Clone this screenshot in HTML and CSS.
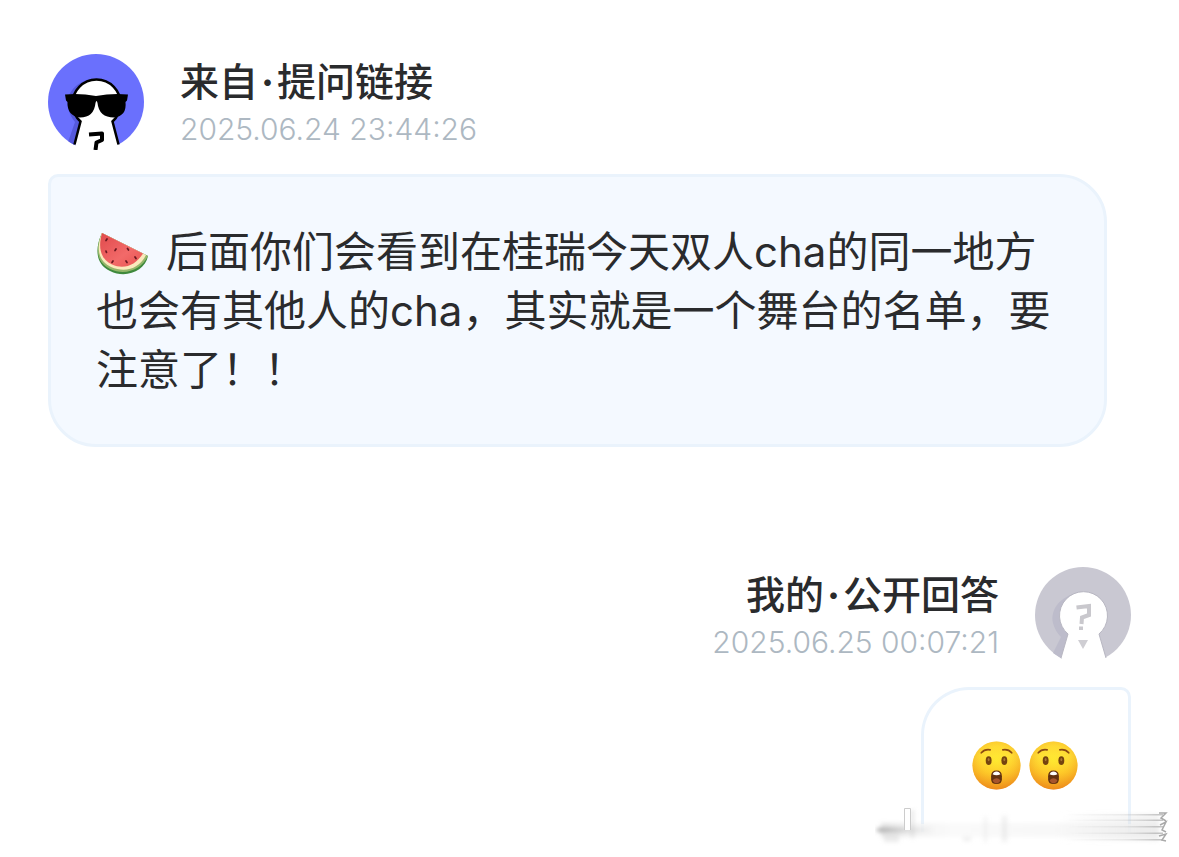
FILE: index.html
```html
<!DOCTYPE html>
<html lang="zh-CN">
<head>
<meta charset="utf-8">
<meta name="viewport" content="width=device-width, initial-scale=1">
<title>提问与回答</title>
<link rel="stylesheet" href="styles.css">
</head>
<body>
<main class="thread">
  <article class="message">
    <header class="sender">
      <svg class="avatar" viewBox="0 0 96 96" aria-hidden="true">
        <defs><clipPath id="disc"><circle cx="48" cy="48" r="48"/></clipPath></defs>
        <circle cx="48" cy="48" r="48" fill="#6a70fd"/>
        <g clip-path="url(#disc)">
          <path d="M42 25C26 29 17 42 20 54Q22 62 27 68L19 91H30L40 60Z" fill="#5559dc"/>
        </g>
        <path d="M26.500 90L32.500 67.500A24 24 0 1 1 64.500 67.500L70.500 90L65 96H31Z" fill="#fff"/>
        <path d="M26.500 90.500L32.500 67.500A24 24 0 1 1 64.500 67.500L70.500 90.500" fill="none" stroke="#000" stroke-width="2.500"/>
        <path d="M17 40.500Q32 39 48 42Q64 39 80 40.500L79 46.500L77.500 48Q79 62 66 63.500Q51 63.500 49.500 49Q48.500 45 47.500 49Q46 63.500 32 63.500Q19 62 19.500 48L18 46.500Z" fill="#000"/>
        <path d="M41 80.500L54 79.500V86L48.500 88.500L47.500 96" fill="none" stroke="#000" stroke-width="4" stroke-linejoin="round"/>
      </svg>
      <div class="meta">
        <h2 class="title">来自<span class="dot">·</span>提问链接</h2>
        <time class="date" datetime="2025-06-24T23:44:26">2025.06.24 23:44:26</time>
      </div>
    </header>
    <p class="bubble question"><svg class="melon" viewBox="0 0 54 46" role="img" aria-label="西瓜">
        <defs>
          <linearGradient id="flesh" x1="0" y1="0" x2="1" y2="1"><stop offset="0" stop-color="#e04a4c"/><stop offset=".6" stop-color="#f26a69"/><stop offset="1" stop-color="#e85450"/></linearGradient>
        </defs>
        <path d="M6 2C-1 17-1 33 14 40C30 48 49 40 52 25Z" fill="#3f8a3d"/>
        <path d="M6 2C-1 17 0 31 14 38C29 45 45 39 52 25Z" fill="#94b76a"/>
        <path d="M6 2C0 17 2 30 15 36C29 42 43 38 50 24Z" fill="#fae9bc"/>
        <path d="M6 2C2 16 4 28 16 33.500C28 39 40 34 47 22.500Z" fill="url(#flesh)"/>
        <g stroke="#6b1720" stroke-width="1.700" stroke-linecap="round"><path d="M11 8l-1 1.500M10 20l.5 1.500M20 18l-1 1.500M31.500 17.500l1 1.500M17 30l-1 1.500M30 30l1 1.500M39 26l1 1.500"/></g>
      </svg>后面你们会看到在桂瑞今天双人cha的同一地方也会有其他人的cha，其实就是一个舞台的名单，要注意了！！</p>
  </article>

  <article class="message reply">
    <header class="sender">
      <svg class="avatar" viewBox="0 0 96 96" aria-hidden="true">
        <circle cx="48" cy="48" r="48" fill="#c9c8d2"/>
        <path d="M43 26C25 29 15 43 18 56Q20 64 26 70L18 86L27 92L36 66Z" fill="#bdbccb"/>
        <path d="M26 91L33 67A24 24 0 1 1 64 67L71 91L65 96H32Z" fill="#fff"/>
        <path d="M26 91L33 67A24 24 0 1 1 64 67L71 91" fill="none" stroke="#b8b7c2" stroke-width="1"/>
        <path d="M41.500 40.500L54 39V48L47 50.500L46.500 57M46 59.500V63" fill="none" stroke="#c9c8cd" stroke-width="4"/>
        <path d="M43 73H53L48 82Z" fill="#cfced3"/>
      </svg>
      <div class="meta">
        <h2 class="title">我的<span class="dot">·</span>公开回答</h2>
        <time class="date" datetime="2025-06-25T00:07:21">2025.06.25 00:07:21</time>
      </div>
    </header>
    <div class="preview">
      <p class="bubble answer">
        <svg class="face" viewBox="0 0 50 50" role="img" aria-label="惊讶">
          <defs>
            <linearGradient id="skin" x1="0" y1="0" x2="0" y2="1"><stop offset="0" stop-color="#ffcf38"/><stop offset=".3" stop-color="#ffdc3a"/><stop offset=".65" stop-color="#fdb825"/><stop offset="1" stop-color="#ee8119"/></linearGradient>
            <radialGradient id="glow" cx=".5" cy=".4" r=".6"><stop offset="0" stop-color="#fff12e" stop-opacity=".7"/><stop offset=".5" stop-color="#ffe32e" stop-opacity=".4"/><stop offset="1" stop-color="#ec901d" stop-opacity=".6"/></radialGradient>
            <g id="astonished">
              <circle cx="25" cy="25" r="24.500" fill="url(#skin)"/>
              <circle cx="25" cy="25" r="24.500" fill="url(#glow)"/>
              <path d="M9.500 12Q13 8 18.500 9M31.500 9Q37 8 40.500 12" fill="none" stroke="#8b4b12" stroke-width="1.800" stroke-linecap="round"/>
              <ellipse cx="17" cy="20" rx="3" ry="4.500" fill="#74430f"/><ellipse cx="33" cy="20" rx="3" ry="4.500" fill="#74430f"/>
              <ellipse cx="17" cy="19" rx="1" ry="1.600" fill="#a77736"/><ellipse cx="33" cy="19" rx="1" ry="1.600" fill="#a77736"/>
              <path d="M19.500 36Q19.500 30 25 30T30.500 36V39Q30.500 44 25 44T19.500 39Z" fill="#62310f"/>
              <path d="M21 34Q22 31 25 31T29 34Q25 36 21 34Z" fill="#fff"/>
              <path d="M21 40Q25 36 29 40Q28 43 25 43T21 40Z" fill="#a6542c"/>
            </g>
          </defs>
          <use href="#astonished"/>
        </svg>
        <svg class="face" viewBox="0 0 50 50" role="img" aria-label="惊讶"><use href="#astonished"/></svg>
      </p>
      <svg class="smudge" viewBox="0 0 296 40" aria-hidden="true">
        <defs>
          <filter id="soft" x="-20%" y="-40%" width="140%" height="180%"><feGaussianBlur stdDeviation="2"/></filter>
          <linearGradient id="haze" x1="0" x2="1"><stop offset="0" stop-color="#aaa" stop-opacity=".35"/><stop offset=".12" stop-color="#ddd" stop-opacity=".35"/><stop offset=".25" stop-color="#eee" stop-opacity=".3"/><stop offset="1" stop-color="#ddd" stop-opacity=".3"/></linearGradient>
          <linearGradient id="streak" gradientUnits="userSpaceOnUse" x1="190" y1="0" x2="288" y2="0"><stop offset="0" stop-color="#aaa" stop-opacity="0"/><stop offset=".6" stop-color="#aaa" stop-opacity=".2"/><stop offset="1" stop-color="#888" stop-opacity=".5"/></linearGradient>
          <linearGradient id="tail" x1="0" x2="1"><stop offset="0" stop-color="#777" stop-opacity=".6"/><stop offset="1" stop-color="#bbb" stop-opacity="0"/></linearGradient>
          <linearGradient id="veil" x1="0" x2="1"><stop offset="0" stop-color="#ddd" stop-opacity="0"/><stop offset="1" stop-color="#ddd" stop-opacity=".4"/></linearGradient>
        </defs>
        <rect x="44" y="18" width="220" height="12" fill="#fff" opacity=".7"/>
        <g filter="url(#soft)">
          <rect x="6" y="17" width="278" height="14" fill="url(#haze)"/>
          <rect x="2" y="22" width="60" height="4" fill="url(#tail)"/>
          <rect x="9" y="27" width="15" height="9" fill="#ddd" opacity=".6"/>
          <rect x="109" y="11" width="3" height="25" fill="#ccc" opacity=".25"/><rect x="127" y="10" width="5" height="26" fill="#ccc" opacity=".3"/><rect x="88" y="31" width="8" height="4" fill="#ddd" opacity=".5"/><rect x="180" y="8" width="104" height="27" fill="url(#veil)"/>
          <rect x="36" y="4" width="3" height="28" fill="#ccc" opacity=".5"/>
        </g>
        <path d="M29.500 24V2.500H35.500V24" fill="#fff" stroke="#ccc" stroke-width="1"/>
        <path d="M190 8H288V9.500H190ZM190 13.500H288V15H190ZM190 20H288V21.500H190ZM190 26.500H288V28H190ZM190 33H288V34.500H190Z" fill="url(#streak)"/>
        <path d="M284 7h7l-5 5 5 3M285 19l6-3-4 8 4 2M284 30l7-2-4 6 4 1" fill="none" stroke="#aaa" stroke-width="1.500"/>
      </svg>
    </div>
  </article>
</main>
</body>
</html>
```
FILE: styles.css
```css
* {
  box-sizing: border-box;
}

body {
  margin: 0;
  background: #fff;
  color: #2a2b2d;
  font-family: Inter, "Noto Sans CJK SC", sans-serif;
}

.thread {
  display: flex;
  flex-direction: column;
  gap: 120px;
  padding: 54px 48px 24px;
}

.message {
  display: flex;
  flex-direction: column;
  align-items: flex-start;
  gap: 24px;
  padding-right: 24px;
}

.sender {
  display: flex;
  gap: 36px;
}

.avatar {
  flex: none;
  width: 96px;
  height: 96px;
}

.meta {
  display: flex;
  flex-direction: column;
  gap: 2px;
}

.title {
  margin: 0;
  font-family: "Noto Sans CJK SC", sans-serif;
  font-size: 39px;
  font-weight: 500;
  line-height: 50px;
}

.dot {
  display: inline-block;
  width: 19px;
  font-family: Inter, sans-serif;
  font-weight: 700;
  text-align: center;
}

.date {
  color: #adb8c2;
  font-size: 30px;
  font-weight: 300;
  line-height: 40px;
}

.bubble {
  margin: 0;
  border: 3px solid #eaf3fc;
}

.question {
  width: 100%;
  padding: 45px;
  border-radius: 10px 48px 48px 48px;
  background: #f4f9ff;
  font-size: 42px;
  line-height: 59px;
}

.melon {
  width: 54px;
  height: 46px;
  margin-right: 16px;
  vertical-align: -10px;
}

.reply {
  align-items: flex-end;
  padding-right: 0;
}

.reply .sender {
  flex-direction: row-reverse;
}

.reply .meta {
  align-items: flex-end;
}

.preview {
  position: relative;
}

.answer {
  display: flex;
  gap: 8px;
  padding: 51px 50px 42px 48px;
  border-bottom: 0;
  border-radius: 48px 10px 0 0;
}

.face {
  width: 49px;
  height: 49px;
}

.smudge {
  position: absolute;
  right: -40px;
  bottom: -14px;
  width: 296px;
  height: 40px;
}
```
